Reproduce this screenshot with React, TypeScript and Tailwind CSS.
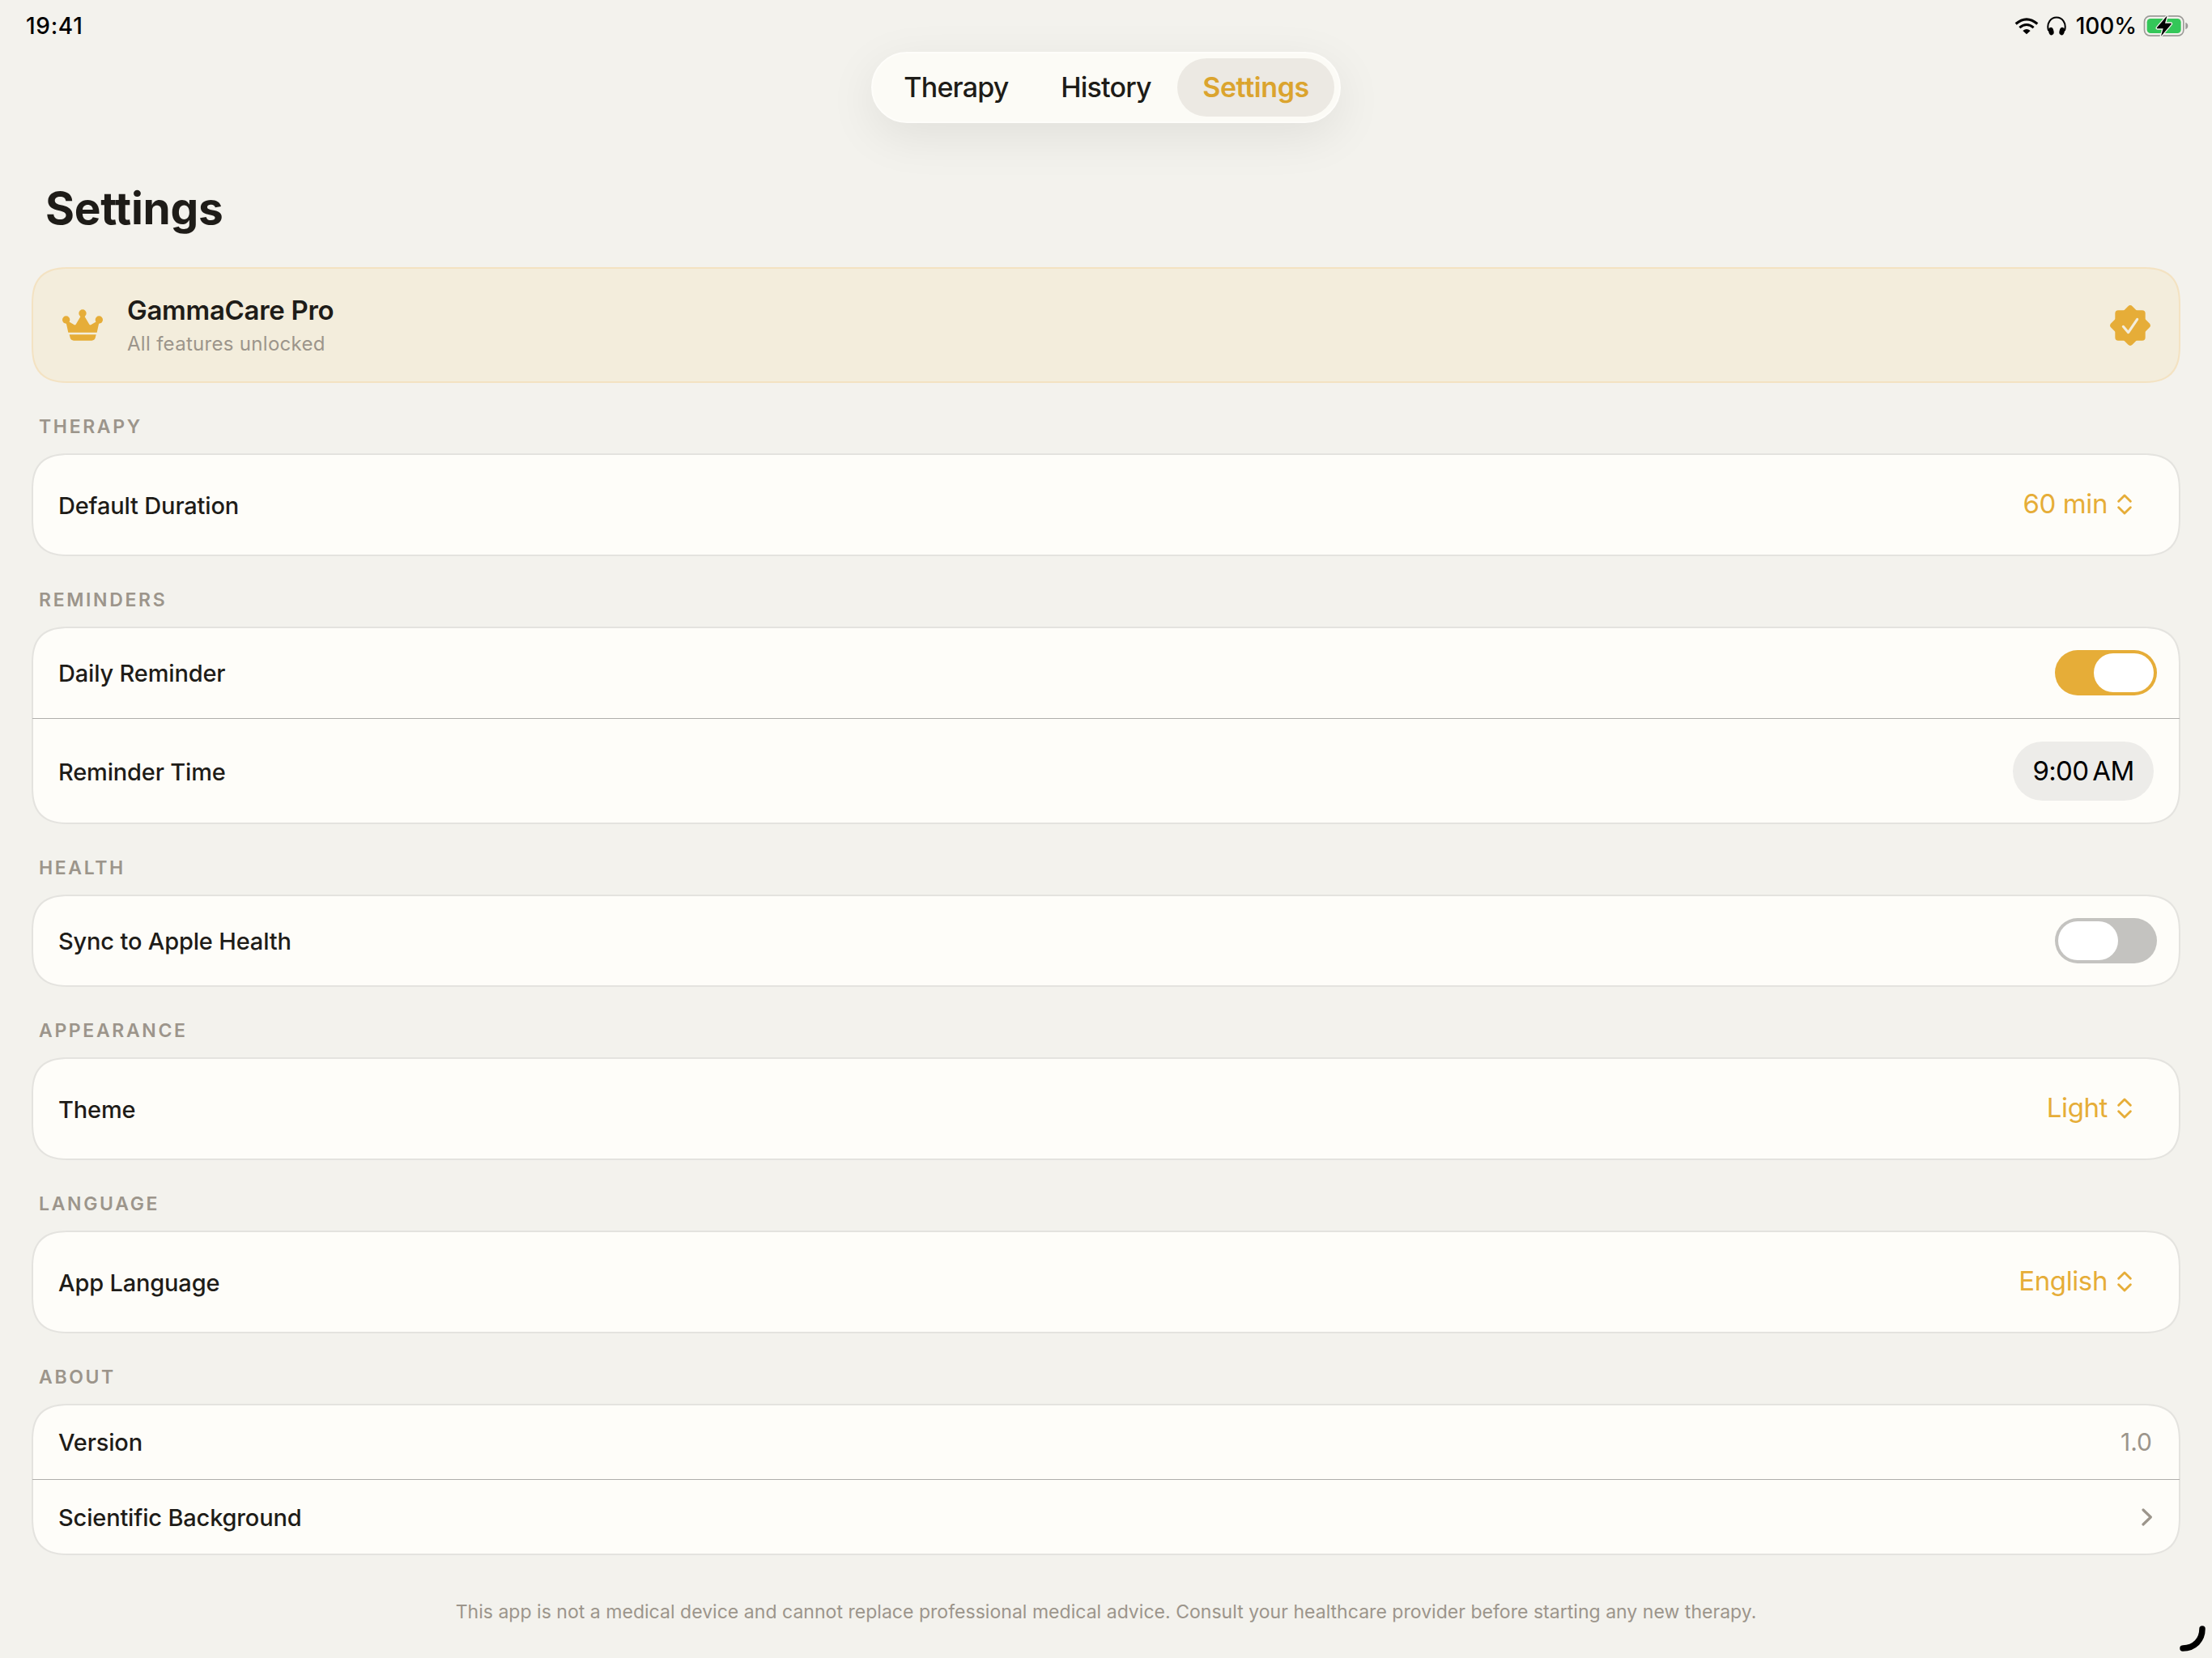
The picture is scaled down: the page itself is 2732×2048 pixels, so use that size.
import React from 'react';

interface RowProps {
  label: string;
  className: string;
  children: React.ReactNode;
}

interface SectionProps {
  title: string;
  children: React.ReactNode;
}

const WifiIcon = () => (
  <svg className="w-[30px] h-[22px]" viewBox="0 0 90 66" fill="none">
    <path d="M5 25.500Q45 -8.500 85 25.500" stroke="black" strokeWidth="9.500" />
    <path d="M19 39.500Q45 17.500 71 39.500" stroke="black" strokeWidth="9" />
    <path d="M31 51Q45 39 59 51L45 64Z" fill="black" />
  </svg>
);

const HeadphonesIcon = () => (
  <svg className="w-6 h-6" viewBox="0 0 72 72" fill="none">
    <path d="M6.500 54C-3 25 16 4.500 36 4.500S75 25 65.500 54" stroke="black" strokeWidth="6" />
    <ellipse cx="16" cy="56" rx="9.500" ry="14.500" transform="rotate(-14 16 56)" fill="black" />
    <ellipse cx="56" cy="56" rx="9.500" ry="14.500" transform="rotate(14 56 56)" fill="black" />
  </svg>
);

const BatteryIcon = () => (
  <svg className="w-[56px] h-[28px]" viewBox="0 0 168 84" fill="none">
    <rect x="4.500" y="5.500" width="145" height="73" rx="21" stroke="#9c9b98" strokeWidth="5" />
    <path d="M157 29.500Q166 33 166 42T157 54.500Z" fill="#9c9b98" />
    <rect x="14" y="15" width="126" height="54" rx="13" fill="#34c759" />
    <path
      d="M89 4L51 48Q49 52 53 52H74L66 80L104 36Q106 32 102 32H81Z"
      fill="black"
      stroke="#f3f2ed"
      strokeWidth="8"
      strokeLinejoin="round"
      paintOrder="stroke"
    />
  </svg>
);

const CrownIcon = () => (
  <svg className="w-[50px] h-[39px]" viewBox="0 0 150 117" fill="#e6ad38">
    <circle cx="75" cy="15" r="14" />
    <circle cx="14" cy="39" r="14" />
    <circle cx="136" cy="39" r="14" />
    <path d="M24 46L43 57Q47 60 50 56L69 24H81L100 56Q103 60 107 57L126 46L136 50L128 86H22L14 50Z" />
    <path d="M26 94H125L122 106Q119 116 109 116H42Q32 116 29 106Z" />
  </svg>
);

const VerifiedIcon = () => (
  <svg className="w-[50px] h-[50px]" viewBox="-75 -75 150 150" fill="none">
    <rect x="-56" y="-56" width="112" height="112" rx="12" fill="#e6ad38" />
    <rect x="-56" y="-56" width="112" height="112" rx="12" fill="#e6ad38" transform="rotate(45)" />
    <path d="M-26 4L-7 26L26 -23" stroke="#f3eddc" strokeWidth="9.500" strokeLinecap="round" strokeLinejoin="round" />
  </svg>
);

const UpDownIcon = () => (
  <svg className="w-[18px] h-[26px]" viewBox="0 0 54 78" fill="none" stroke="#e6ad38" strokeWidth="8.500" strokeLinecap="round" strokeLinejoin="round">
    <path d="M5 28L27 6L49 28" />
    <path d="M5 50L27 72L49 50" />
  </svg>
);

const Toggle = ({ on }: { on: boolean }) => (
  <div className={`flex w-[126px] h-14 p-1 mr-[27px] rounded-full ${on ? 'bg-[#e6ad38] justify-end' : 'bg-[#c4c3c0] justify-start'}`}>
    <div className="w-[74px] h-12 rounded-full bg-white" />
  </div>
);

const Picker = ({ value }: { value: string }) => (
  <div className="flex items-center gap-3 pr-[58px] pb-px text-[33px] leading-10 text-[#e6ad38]">
    <span className="-mt-0.5 tracking-[-0.4px]">{value}</span>
    <UpDownIcon />
  </div>
);

const Card = ({ children }: { children: React.ReactNode }) => (
  <div className="mx-[39px] border-2 border-[#e4e3df] bg-[#fefdf9] rounded-[48px] [corner-shape:superellipse(1.45)]">
    {children}
  </div>
);

const Row: React.FC<RowProps> = ({ label, className, children }) => (
  <div className={`flex items-center justify-between pl-[31px] ${className}`}>
    <span className="pt-0.5 text-[29px] leading-9 font-medium tracking-[-0.17px] text-[#1e1c18]">{label}</span>
    {children}
  </div>
);

const Divider = () => <div className="h-px -mx-px bg-[#b0afac]" />;

const Section: React.FC<SectionProps> = ({ title, children }) => (
  <section>
    <h2 className="h-[87px] pt-[38px] pl-[48px] text-[23px] leading-8 font-semibold tracking-[2.65px] text-[#9c958b]">
      {title}
    </h2>
    <Card>{children}</Card>
  </section>
);

export default function App() {
  return (
    <div className="relative w-[2732px] h-[2048px] overflow-hidden bg-[#f3f2ed] font-['Inter',sans-serif]">
      {/* Status bar */}
      <header className="flex items-center justify-between h-16 pl-8 pr-[29px] text-[28px] leading-8 font-medium text-black">
        <span className="tracking-[0.7px]">19:41</span>
        <div className="flex items-center">
          <WifiIcon />
          <span className="ml-2.5">
            <HeadphonesIcon />
          </span>
          <span className="ml-3 mr-2 tracking-[-0.1px]">100%</span>
          <BatteryIcon />
        </div>
      </header>

      <nav className="flex w-[580px] h-[88px] mx-auto py-2 px-1.5 rounded-full bg-[#fcfbf6] border-2 border-[#fefdfa] shadow-[0_16px_60px_rgba(0,0,0,0.08)] text-[34px] font-medium tracking-[-0.8px] text-[#1e1c18]">
        <a className="-my-0.5 pb-0.5 flex w-[194px] shrink-0 items-center justify-center">Therapy</a>
        <a className="-my-0.5 pb-0.5 -ml-[9px] flex w-[194px] shrink-0 items-center justify-center">History</a>
        <a className="-my-0.5 pb-0.5 -ml-[9px] flex w-[194px] shrink-0 items-center justify-center rounded-full bg-[#ece9e3] font-semibold tracking-[-0.4px] text-[#dba42e]">
          Settings
        </a>
      </nav>

      <h1 className="mt-[73px] ml-14 text-[55px] leading-[64px] font-bold tracking-[-0.3px] text-[#1e1c18]">Settings</h1>

      <div className="flex items-center mt-[41px] mx-[39px] h-[143px] pl-9 pr-[35px] border-2 border-[#f3e2c2] bg-[#f3eddc] rounded-[48px] [corner-shape:superellipse(1.45)]">
        <CrownIcon />
        <div className="ml-[30px] grow">
          <div className="text-[33px] leading-10 font-semibold tracking-[-0.3px] text-[#1e1c18]">GammaCare Pro</div>
          <div className="mt-1.5 text-[24px] leading-8 tracking-[0.3px] text-[#9c958b]">All features unlocked</div>
        </div>
        <VerifiedIcon />
      </div>

      <Section title="THERAPY">
        <Row label="Default Duration" className="h-[123px]">
          <Picker value="60 min" />
        </Row>
      </Section>

      <Section title="REMINDERS">
        <Row label="Daily Reminder" className="h-[111px] pb-px">
          <Toggle on={true} />
        </Row>
        <Divider />
        <Row label="Reminder Time" className="h-[128px] pt-px">
          <div className="flex items-center justify-center w-[174px] h-[73px] mr-[31px] rounded-full bg-[#edece9] text-[33px] tracking-[-0.7px] text-black">
            <span>9:00</span>
            <span className="ml-[5px]">AM</span>
          </div>
        </Row>
      </Section>

      <Section title="HEALTH">
        <Row label="Sync to Apple Health" className="h-[110px]">
          <Toggle on={false} />
        </Row>
      </Section>

      <Section title="APPEARANCE">
        <Row label="Theme" className="h-[123px]">
          <Picker value="Light" />
        </Row>
      </Section>

      <Section title="LANGUAGE">
        <Row label="App Language" className="h-[123px]">
          <Picker value="English" />
        </Row>
      </Section>

      <Section title="ABOUT">
        <Row label="Version" className="h-[91px] pb-px">
          <span className="pr-[33px] text-[30px] text-[#9c958b]">1.0</span>
        </Row>
        <Divider />
        <Row label="Scientific Background" className="h-[91px]">
          <svg className="w-[14px] h-[22px] mr-[32px]" viewBox="0 0 42 66" fill="none" stroke="#9c958b" strokeWidth="9.500" strokeLinecap="round" strokeLinejoin="round">
            <path d="M6 6L34 33L6 60" />
          </svg>
        </Row>
      </Section>

      <p className="mt-[54px] text-center text-[23px] leading-8 tracking-[0.03px] text-[#9c958b]">
        This app is not a medical device and cannot replace professional medical advice. Consult your healthcare provider before starting any new therapy.
      </p>

      {/* Resize handle of the window */}
      <svg className="absolute right-2 bottom-2 w-8 h-8" viewBox="0 0 32 32" fill="none" stroke="black" strokeWidth="7.500" strokeLinecap="round">
        <path d="M28 4C28 17 19 28 4 28" />
      </svg>
    </div>
  );
}
